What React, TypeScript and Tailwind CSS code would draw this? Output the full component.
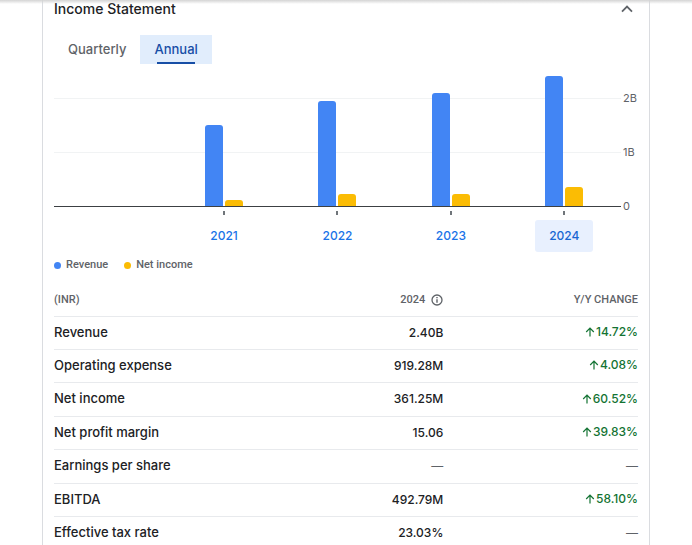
import { useState } from "react";

type Year = { year: string; revenue: number; income: number };
type Row = { label: string; value: string; change: string | null };

const PIXELS_PER_BILLION = 54;

const years: Year[] = [
  { year: "2021", revenue: 1.5, income: 0.11 },
  { year: "2022", revenue: 1.95, income: 0.22 },
  { year: "2023", revenue: 2.09, income: 0.23 },
  { year: "2024", revenue: 2.4, income: 0.361 },
];

const rows: Row[] = [
  { label: "Revenue", value: "2.40B", change: "14.72%" },
  { label: "Operating expense", value: "919.28M", change: "4.08%" },
  { label: "Net income", value: "361.25M", change: "60.52%" },
  { label: "Net profit margin", value: "15.06", change: "39.83%" },
  { label: "Earnings per share", value: "—", change: null },
  { label: "EBITDA", value: "492.79M", change: "58.10%" },
  { label: "Effective tax rate", value: "23.03%", change: null },
];

function Bar({ amount, className }: { amount: number; className: string }) {
  return (
    <div
      className={`w-[18px] rounded-t-[3px] ${className}`}
      style={{ height: Math.round(amount * PIXELS_PER_BILLION) }}
    />
  );
}

function Chart() {
  const [selected, setSelected] = useState("2024");
  return (
    <div className="mt-2 flex">
      <div className="flex-1">
        <div className="relative h-[135px] border-b border-[#3c4043]">
          <div className="absolute inset-x-0 top-[26px] flex flex-col gap-[53px]">
            <div className="h-px bg-[#f1f3f4]" />
            <div className="h-px bg-[#f1f3f4]" />
          </div>
          <div className="relative grid h-full grid-cols-5">
            {years.map((y, i) => (
              <div
                key={y.year}
                className={`flex items-end justify-center gap-0.5 ${i === 0 ? "col-start-2" : ""}`}
              >
                <Bar amount={y.revenue} className="bg-[#4285f4]" />
                <Bar amount={y.income} className="bg-[#fbbc04]" />
              </div>
            ))}
          </div>
        </div>
        <div className="grid grid-cols-5">
          {years.map((y, i) => (
            <div
              key={y.year}
              className={`flex flex-col items-center pt-1 ${i === 0 ? "col-start-2" : ""}`}
            >
              <div className="h-1 w-0.5 bg-[#70757a]" />
              <button
                type="button"
                onClick={() => setSelected(y.year)}
                className={`mt-[5px] h-8 w-[58px] rounded-[3px] text-[12px] font-medium ${
                  selected === y.year ? "bg-[#e8f0fe] text-[#1967d2]" : "text-[#1a73e8]"
                }`}
              >
                {y.year}
              </button>
            </div>
          ))}
        </div>
      </div>
      <div className="flex w-[17px] flex-col gap-[38px] pt-[18px] pl-0.5 text-[11px] leading-4 text-[#5f6368]">
        <span>2B</span>
        <span>1B</span>
        <span>0</span>
      </div>
    </div>
  );
}

function InfoIcon() {
  return (
    <svg viewBox="0 0 12 12" className="size-3" fill="none" stroke="#5f6368" aria-hidden="true">
      <circle cx="6" cy="6" r="5" strokeWidth="1.3" />
      <path d="M6 5.2v3.6M6 3v1.3" strokeWidth="1.4" />
    </svg>
  );
}

function UpArrow() {
  return (
    <svg
      viewBox="0 0 10 10"
      className="size-2.5"
      fill="none"
      stroke="currentColor"
      strokeWidth="1.2"
      aria-hidden="true"
    >
      <path d="M5 9.6V1.4M1.2 5L5 1.2L8.8 5" />
    </svg>
  );
}

export default function App() {
  const [period, setPeriod] = useState("Annual");
  return (
    <div className="relative h-screen overflow-hidden bg-white font-['Inter','Roboto',sans-serif] text-[#202124]">
      <div className="absolute inset-x-0 top-0 h-1 bg-linear-to-b from-[#d4d4d4] to-transparent" />
      <section className="mx-[42px] border-x border-[#dadce0] px-[11px]">
        <header className="flex h-[18px] items-center justify-between">
          <h2 className="text-[14px] leading-5 font-medium">Income Statement</h2>
          <button type="button" aria-label="Collapse" className="flex w-[22px] justify-center">
            <svg viewBox="0 0 12 8" className="h-2 w-3" fill="none" stroke="#5f6368" strokeWidth="1.8">
              <path d="M1 6.6L6 1.6L11 6.6" />
            </svg>
          </button>
        </header>

        <div className="mt-[17px] flex" role="tablist">
          {["Quarterly", "Annual"].map((name) => {
            const active = name === period;
            return (
              <button
                key={name}
                type="button"
                role="tab"
                aria-selected={active}
                onClick={() => setPeriod(name)}
                className={`flex h-[29px] flex-col items-center justify-between px-3.5 pt-1 text-[13px] leading-5 font-medium ${
                  active ? "bg-[#e1edfc] text-[#174ea6]" : "text-[#5f6368]"
                }`}
              >
                {name}
                <span className={`h-0.5 w-[38px] ${active ? "bg-[#174ea6]" : ""}`} />
              </button>
            );
          })}
        </div>

        <Chart />

        <div className="mt-[5px] flex h-4 items-center gap-4 font-['Roboto',sans-serif] text-[11px] font-medium text-[#5f6368]">
          <span className="flex items-center gap-[5px]">
            <i className="size-[7px] rounded-full bg-[#4285f4]" />
            Revenue
          </span>
          <span className="flex items-center gap-[5px]">
            <i className="size-[7px] rounded-full bg-[#fbbc04]" />
            Net income
          </span>
        </div>

        <table className="mt-3 w-full table-fixed border-collapse">
          <thead>
            <tr className="h-[31px] border-b border-[#e8eaed] font-['Roboto',sans-serif] text-[11px] text-[#5f6368]">
              <th className="w-1/3 text-left font-medium">(INR)</th>
              <th className="w-1/3 font-medium">
                <span className="flex items-center justify-end gap-1.5">
                  2024
                  <InfoIcon />
                </span>
              </th>
              <th className="w-1/3 text-right font-medium">Y/Y CHANGE</th>
            </tr>
          </thead>
          <tbody>
            {rows.map((row) => (
              <tr
                key={row.label}
                className="h-[33px] border-b border-[#e8eaed] text-[12px] leading-5 font-medium [&:nth-child(2n+3)]:h-[34px]"
              >
                <td className="pb-0.5 text-[13px]">{row.label}</td>
                <td className={`text-right ${row.value === "—" ? "text-[#5f6368]" : ""}`}>{row.value}</td>
                <td className="text-right">
                  {row.change ? (
                    <span className="inline-flex items-center gap-px text-[#137333]">
                      <UpArrow />
                      {row.change}
                    </span>
                  ) : (
                    <span className="text-[#5f6368]">—</span>
                  )}
                </td>
              </tr>
            ))}
          </tbody>
        </table>
      </section>
    </div>
  );
}
